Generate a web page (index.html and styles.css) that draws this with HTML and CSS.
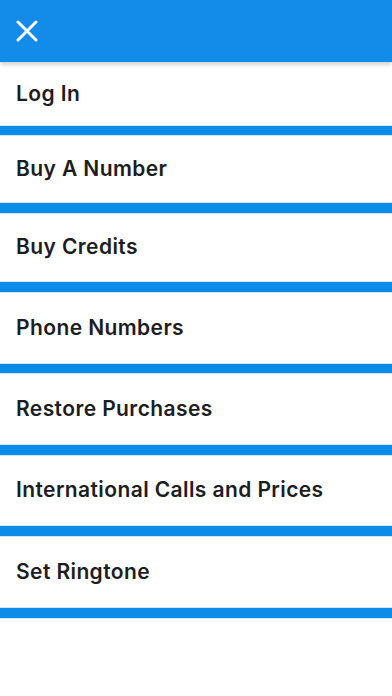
FILE: index.html
```html
<!DOCTYPE html>
<html lang="en">
<head>
<meta charset="utf-8">
<meta name="viewport" content="width=device-width, initial-scale=1">
<title>Menu</title>
<link rel="stylesheet" href="styles.css">
</head>
<body>
<header class="topbar">
  <button class="close" aria-label="Close">
    <svg width="22" height="22" viewBox="0 0 22 22" aria-hidden="true">
      <path d="M2 2 L20 20 M20 2 L2 20" stroke="#fff" stroke-width="3" stroke-linecap="round" fill="none"/>
    </svg>
  </button>
</header>
<nav class="menu">
  <div class="item item-a">Log In</div>
  <div class="sep sep-s"></div>
  <div class="item item-b">Buy A Number</div>
  <div class="sep"></div>
  <div class="item item-c">Buy Credits</div>
  <div class="sep"></div>
  <div class="item">Phone Numbers</div>
  <div class="sep sep-s"></div>
  <div class="item">Restore Purchases</div>
  <div class="sep"></div>
  <div class="item item-d">International Calls and Prices</div>
  <div class="sep"></div>
  <div class="item">Set Ringtone</div>
  <div class="sep"></div>
</nav>
</body>
</html>
```

FILE: styles.css
```css
html, body {
  margin: 0;
  padding: 0;
  background: #ffffff;
}
body {
  font-family: "Inter", "Noto Sans", "Liberation Sans", sans-serif;
  width: 392px;
  height: 696px;
  overflow: hidden;
}
.topbar {
  position: relative;
  z-index: 2;
  height: 62px;
  background: #128ce8;
  display: flex;
  align-items: center;
  padding-left: 16px;
  box-shadow: 0 2px 5px rgba(0, 0, 0, 0.22);
}
.close {
  background: none;
  border: 0;
  padding: 0;
  margin: 0;
  width: 22px;
  height: 22px;
  display: flex;
}
.menu {
  display: flex;
  flex-direction: column;
}
.item {
  height: 72px;
  display: flex;
  align-items: center;
  padding-left: 16px;
  font-size: 21px;
  font-weight: 600;
  color: #1d1d1f;
  letter-spacing: 0.4px;
  padding-bottom: 2px;
  box-sizing: border-box;
}
.item-a { height: 64px; }
.item-b { height: 68px; }
.item-c { height: 69px; }
.item-d { height: 71px; }
.sep {
  height: 10px;
  background: #0b8ce8;
  box-shadow: 0 0 0 1px rgba(110, 190, 245, 0.35);
}
.sep-s { height: 9px; }
```
